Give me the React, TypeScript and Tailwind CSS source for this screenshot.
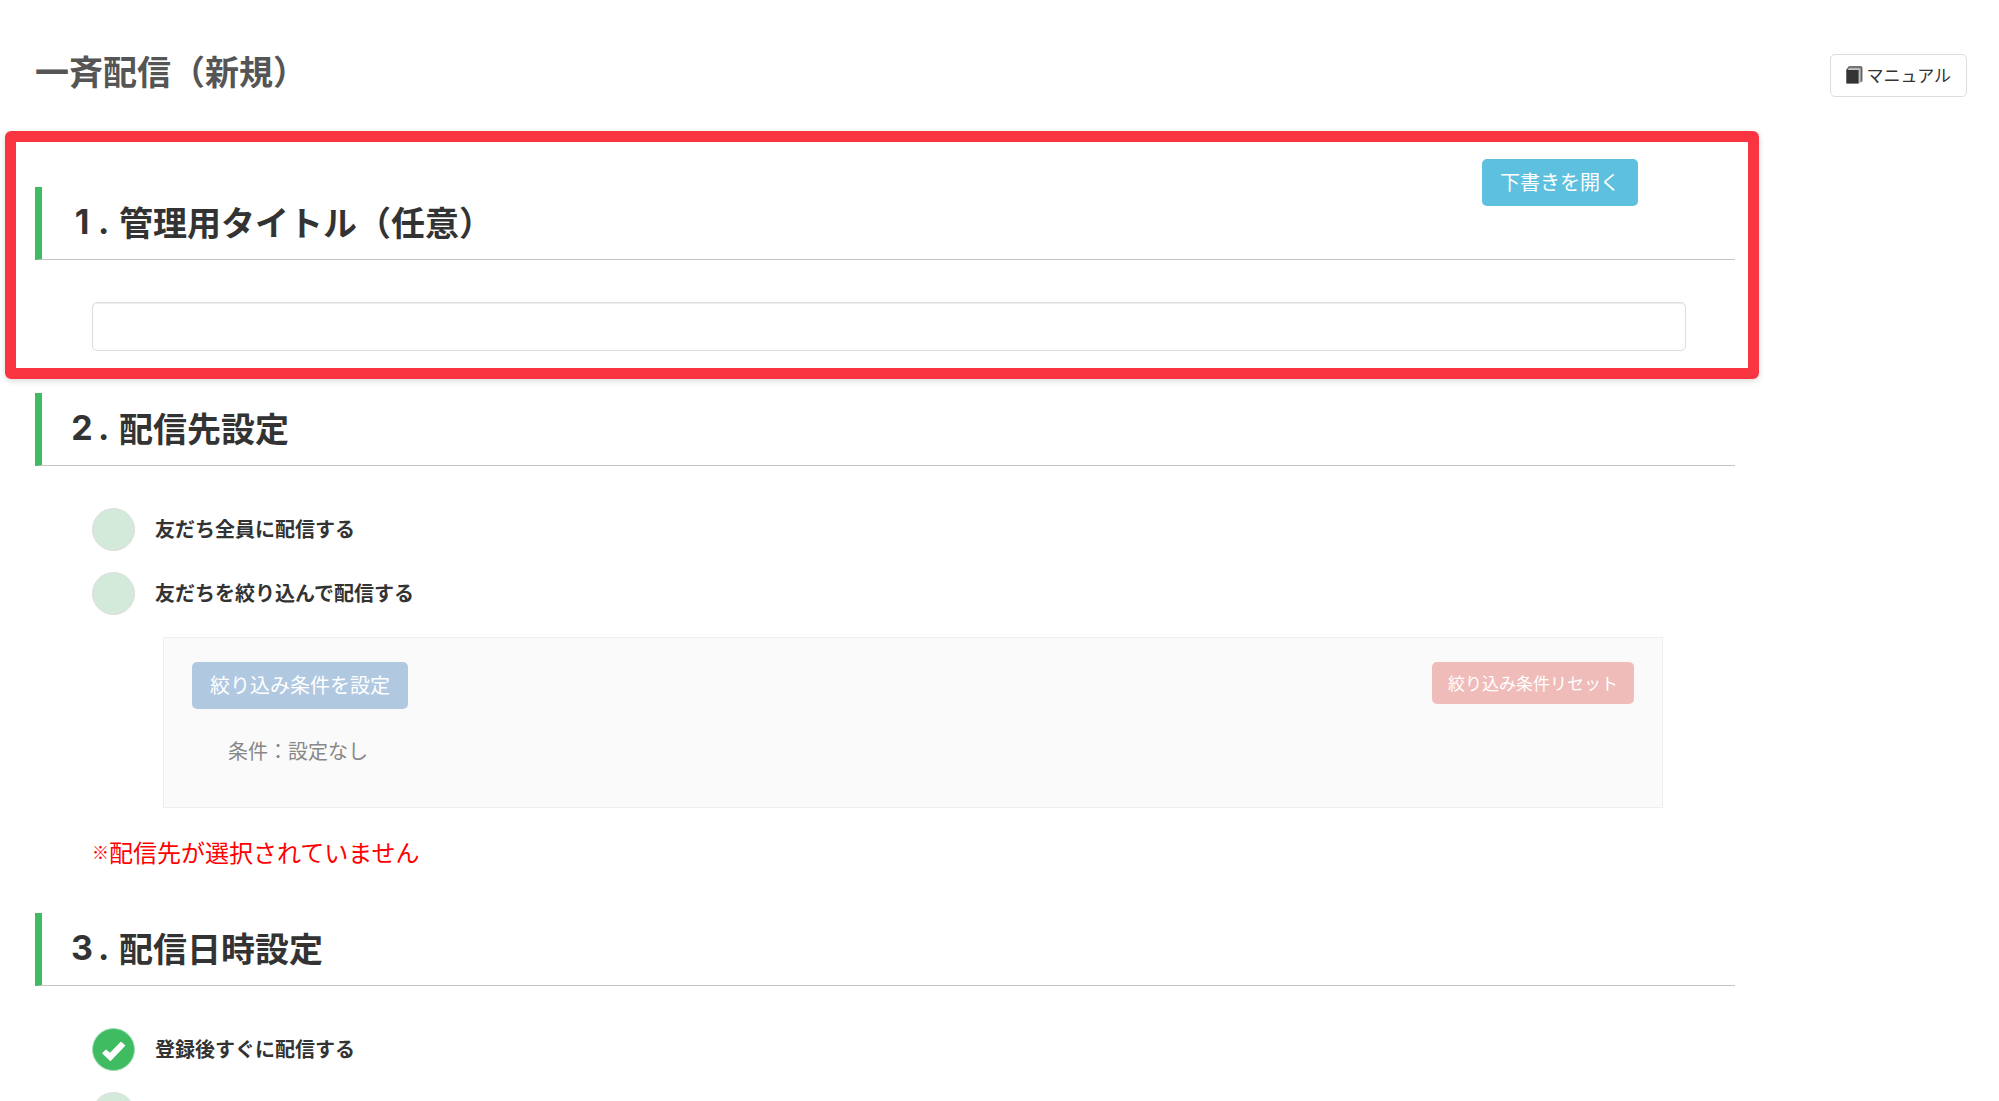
import React, { ReactNode, useState } from 'react';

interface SectionTitleProps {
    no: number;
    children: ReactNode;
}

function SectionTitle({ no, children }: SectionTitleProps) {
    return (
        <h2 className="flex h-[73px] items-center border-b border-[#c4c4c4] border-l-[7px] border-l-[#3fbc62] pb-0.5 pl-7 text-[34px] leading-none font-bold text-[#333]">
            <span className="flex w-[49px] shrink-0 gap-1 font-['Inter','Noto_Sans_CJK_JP',sans-serif]">
                <span className="w-6 text-center">{no}</span>
                <span>.</span>
            </span>
            <span>{children}</span>
        </h2>
    );
}

interface RadioRowProps {
    name: string;
    label?: string;
    checked: boolean;
    onChange: () => void;
}

function RadioRow({ name, label, checked, onChange }: RadioRowProps) {
    return (
        <label className="flex w-fit cursor-pointer items-center gap-5 text-xl leading-none font-bold text-[#333]">
            <span className="relative h-[43px] w-[43px] shrink-0">
                <input
                    type="radio"
                    name={name}
                    aria-label={label ?? '配信日時を指定する'}
                    checked={checked}
                    onChange={onChange}
                    className="peer block h-full w-full appearance-none rounded-full border border-[#ddd] bg-[#d3e9da] checked:border-[#a5deb6] checked:bg-[#3fbc62]"
                />
                <svg
                    viewBox="0 0 43 43"
                    className="pointer-events-none absolute inset-0 hidden h-full w-full peer-checked:block"
                    aria-hidden="true"
                >
                    <path
                        d="M11 25.3L14 22.3L18 25.8L29 14.6L32.5 17.6L18.4 32.2Z"
                        fill="#fff"
                        stroke="#fff"
                        strokeWidth="1.4"
                        strokeLinejoin="round"
                    />
                </svg>
            </span>
            {label && <span className="pb-px">{label}</span>}
        </label>
    );
}

function BookIcon() {
    return (
        <svg viewBox="0 0 17 18" className="h-[18px] w-[17px]" aria-hidden="true">
            <path d="M0.5 4.2L3.8 0.5H14.8Q16 0.5 16 1.7V15L13.4 17.5V4.2Z" fill="#9a9a9a" />
            <path d="M0.5 4.4L3.2 0.8H14.8Q15.8 0.8 15.8 1.8V15.5" fill="none" stroke="#555" strokeWidth="1.2" />
            <path d="M2.4 3.2H13.2V4" fill="none" stroke="#ddd" strokeWidth="1" />
            <rect x="0.3" y="4" width="12.4" height="13.6" fill="#333" />
        </svg>
    );
}

export default function App() {
    const [title, setTitle] = useState('');
    const [target, setTarget] = useState('');
    const [timing, setTiming] = useState('now');

    return (
        <div className="h-screen overflow-hidden bg-white font-['Noto_Sans_CJK_JP',sans-serif] text-[#333]">
            {/* Header */}
            <header className="flex items-start justify-between pt-[54px] pr-8 pl-[35px]">
                <h1 className="text-[34px] leading-[34px] font-bold text-[#555]">一斉配信（新規）</h1>
                <a
                    href="#manual"
                    className="flex h-[43px] items-center gap-1 rounded-[5px] border border-[#ddd] px-[15px] pb-0.5 text-[17px] leading-none"
                >
                    <BookIcon />
                    マニュアル
                </a>
            </header>

            <main className="mr-60">
                {/* Title */}
                <section className="mt-[34px] ml-[5px] rounded-md border-[11px] border-[#fa3542] pt-[17px] pr-[13px] pb-[17px] pl-[19px] shadow-[0_2px_6px_rgba(0,0,0,0.15)]">
                    <div className="flex justify-end pr-[97px]">
                        <button
                            type="button"
                            className="h-[47px] rounded-[5px] bg-[#5dc0de] px-[18px] pb-0.5 text-xl leading-none text-white"
                        >
                            下書きを開く
                        </button>
                    </div>
                    <div className="-mt-[19px]">
                        <SectionTitle no={1}>管理用タイトル（任意）</SectionTitle>
                    </div>
                    <div className="mt-[42px] mr-[49px] ml-[57px]">
                        <input
                            type="text"
                            aria-label="管理用タイトル（任意）"
                            value={title}
                            onChange={(e) => setTitle(e.target.value)}
                            className="block h-[49px] w-full rounded-[5px] border border-[#ddd] px-4 text-xl shadow-[inset_0_1px_1px_rgba(0,0,0,0.07)]"
                        />
                    </div>
                </section>

                {/* Target */}
                <section className="mt-3.5 mr-6 ml-[35px]">
                    <SectionTitle no={2}>配信先設定</SectionTitle>
                    <div className="mt-[42px] ml-[57px] flex flex-col gap-[21px]">
                        <RadioRow
                            name="target"
                            label="友だち全員に配信する"
                            checked={target === 'all'}
                            onChange={() => setTarget('all')}
                        />
                        <RadioRow
                            name="target"
                            label="友だちを絞り込んで配信する"
                            checked={target === 'filter'}
                            onChange={() => setTarget('filter')}
                        />
                    </div>
                    <div className="mt-[22px] mr-[72px] ml-32 flex h-[171px] items-start justify-between border border-[#eee] bg-[#fafafa] px-7 pt-6">
                        <div>
                            <button
                                type="button"
                                className="h-[47px] rounded-[5px] bg-[#b1c8e1] px-[18px] pb-0.5 text-xl leading-none text-white"
                            >
                                絞り込み条件を設定
                            </button>
                            <p className="mt-[30px] pl-9 text-xl leading-6 text-[#888]">条件：設定なし</p>
                        </div>
                        <button
                            type="button"
                            className="h-[42px] rounded-[5px] bg-[#f0bcba] px-4 pb-0.5 text-[17px] leading-none text-white"
                        >
                            絞り込み条件リセット
                        </button>
                    </div>
                    <p className="mt-[26px] ml-[57px] flex items-center text-2xl leading-9 text-[#f00]">
                        <span className="text-[17px]">※</span>
                        配信先が選択されていません
                    </p>
                </section>

                {/* Schedule */}
                <section className="mt-[43px] mr-6 ml-[35px]">
                    <SectionTitle no={3}>配信日時設定</SectionTitle>
                    <div className="mt-[42px] ml-[57px] flex flex-col gap-[21px]">
                        <RadioRow
                            name="timing"
                            label="登録後すぐに配信する"
                            checked={timing === 'now'}
                            onChange={() => setTiming('now')}
                        />
                        <RadioRow
                            name="timing"
                            checked={timing === 'later'}
                            onChange={() => setTiming('later')}
                        />
                    </div>
                </section>
            </main>
        </div>
    );
}
